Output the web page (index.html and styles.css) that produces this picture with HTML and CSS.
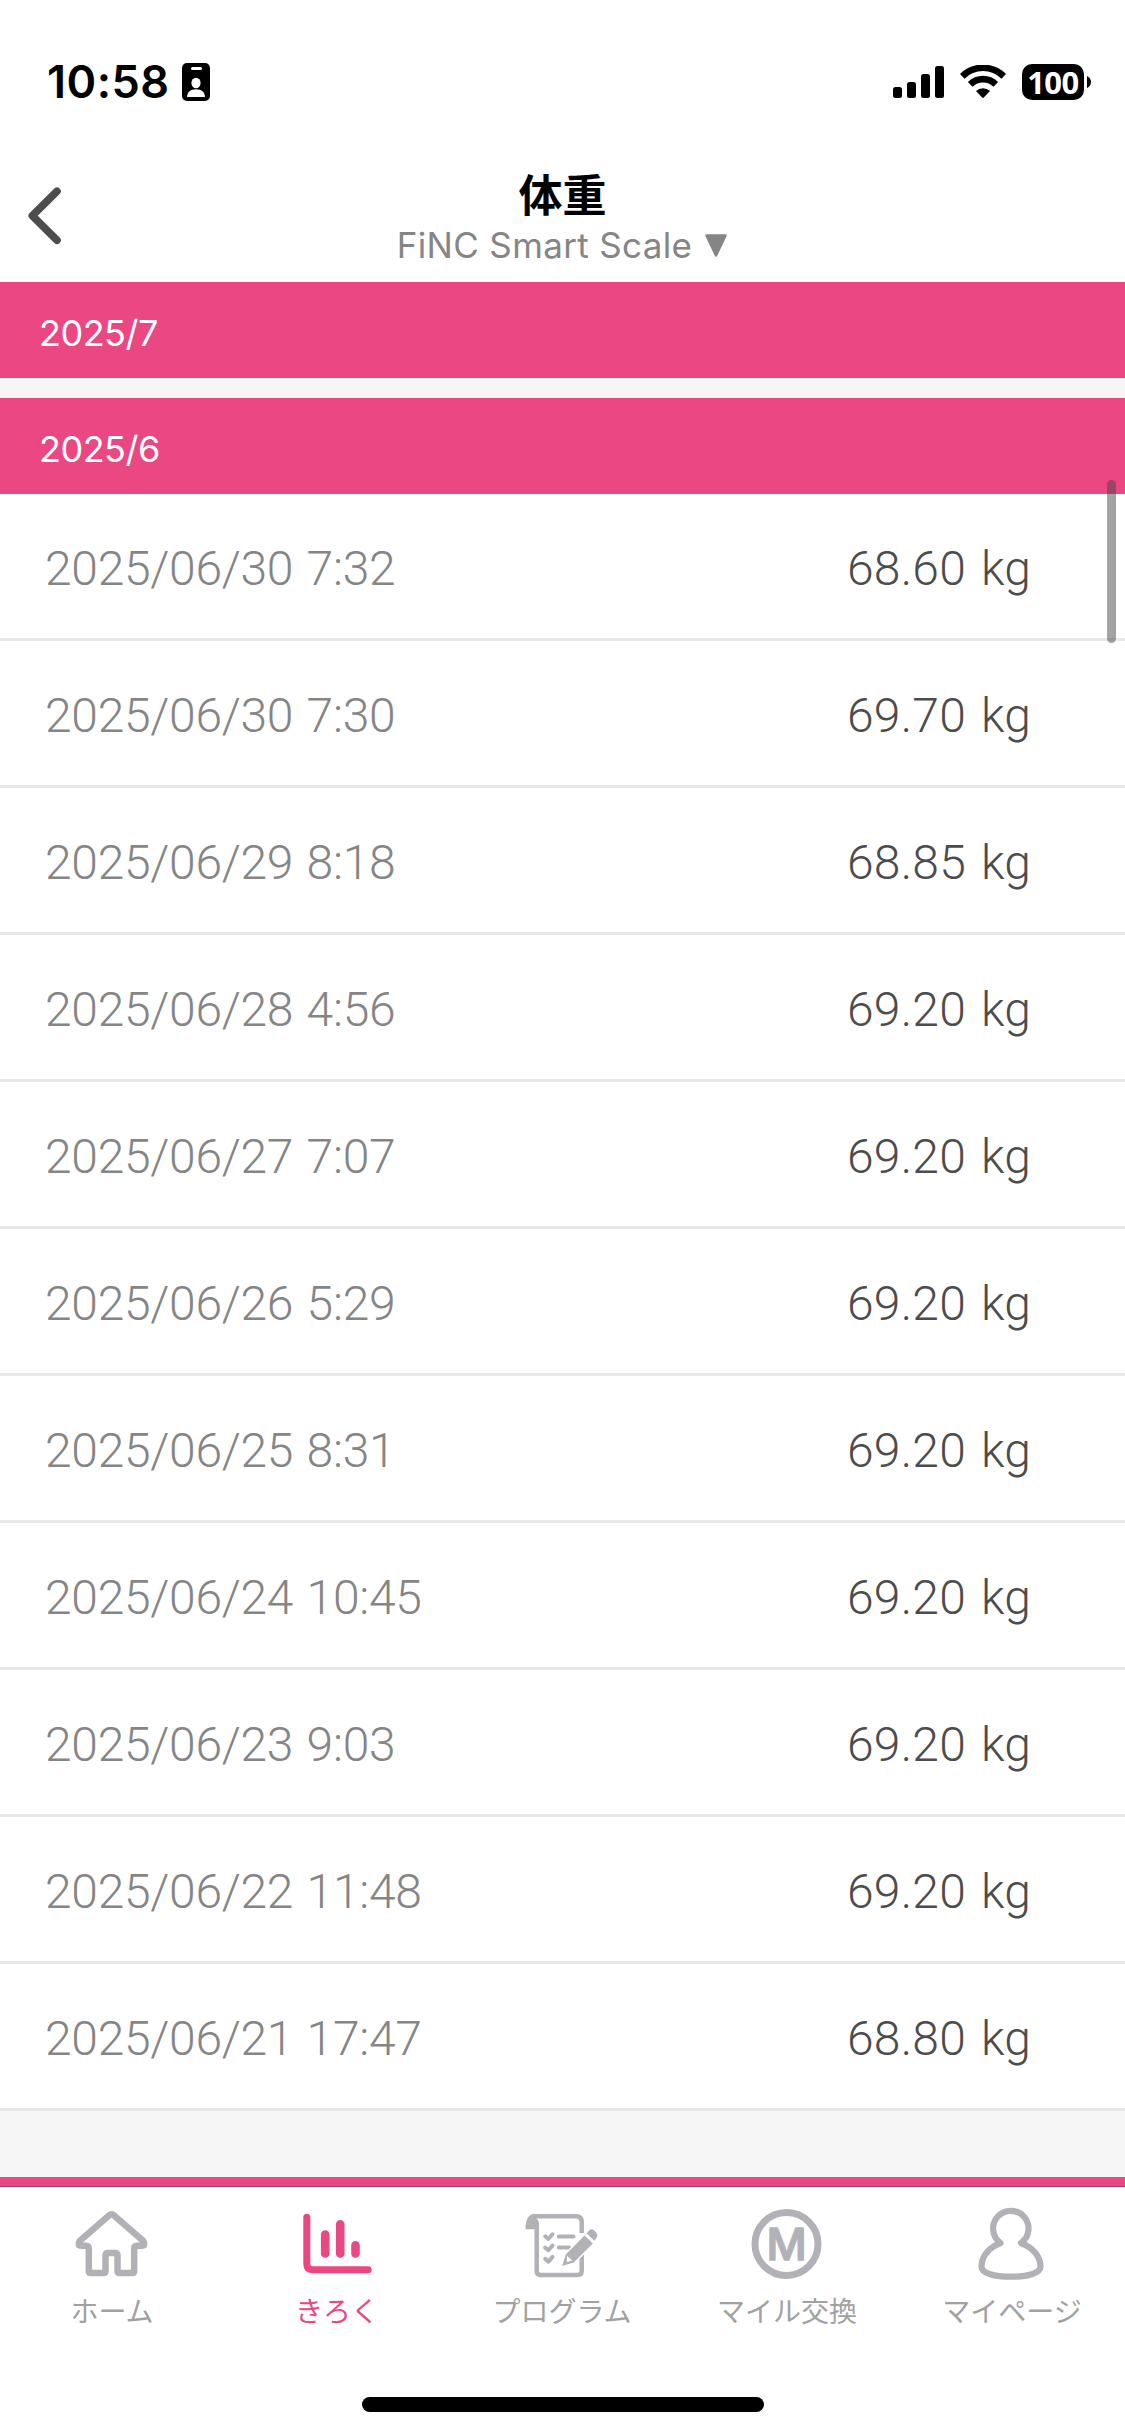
FILE: index.html
```html
<!DOCTYPE html>
<html lang="ja">
<head>
<meta charset="utf-8">
<title>体重</title>
<link rel="stylesheet" href="styles.css">
</head>
<body>
<div class="app">
  <div class="status">
    <div class="status-left">
      <span class="clock">10:58</span>
      <svg class="badge" width="28" height="38" viewBox="0 0 28 38"><rect width="28" height="38" rx="5"/><rect x="9" y="4" width="11" height="3" rx="1.5" fill="#fff"/><ellipse cx="14" cy="20" rx="4.6" ry="5.2" fill="#fff"/><path d="M5 34c0-5 4-7.700 9-7.700s9 2.700 9 7.700z" fill="#fff"/></svg>
    </div>
    <div class="status-right">
      <svg width="51" height="32" viewBox="0 0 51 32"><rect y="21" width="9" height="11" rx="2.500"/><rect x="14" y="16" width="9" height="16" rx="2.500"/><rect x="28" y="8" width="9" height="24" rx="2.500"/><rect x="42" width="9" height="32" rx="2.500"/></svg>
      <svg class="wifi" width="46" height="34" viewBox="0 0 46 34"><g fill="none" stroke="#000" stroke-width="6.600"><path d="M2.300 11.300a29.500 29.500 0 0 1 41.400 0"/><path d="M10.200 19.300a18.300 18.300 0 0 1 25.600 0"/></g><path d="M16 26a10.500 10.500 0 0 1 14 0l-6.200 6.500q-.8.800-1.600 0z"/></svg>
      <div class="battery"><span class="battery-level">100</span></div>
      <svg class="nub" width="4" height="12" viewBox="0 0 4 12"><path d="M0 0q4 2 4 6t-4 6z"/></svg>
    </div>
  </div>
  <header class="header">
    <svg class="back" width="40" height="60" viewBox="0 0 40 60"><path d="M33 5.300L8.300 29.700L33 54.300" fill="none" stroke="#4d4d4d" stroke-width="7.600" stroke-linecap="round" stroke-linejoin="round"/></svg>
    <div class="titles">
      <h1 class="title">体重</h1>
      <div class="device"><span>FiNC Smart Scale</span><svg width="22" height="23" viewBox="0 0 22 23"><path d="M1.500 1.500h19L11 21.500z" fill="#858585" stroke="#858585" stroke-width="2.500" stroke-linejoin="round"/></svg></div>
    </div>
    <div></div>
  </header>
  <main class="records">
    <h2 class="month">2025/7</h2>
    <h2 class="month">2025/6</h2>
    <ul class="list">
      <li class="row"><span class="date">2025/06/30 7:32</span><span class="weight">68.60 kg</span></li>
      <li class="row"><span class="date">2025/06/30 7:30</span><span class="weight">69.70 kg</span></li>
      <li class="row"><span class="date">2025/06/29 8:18</span><span class="weight">68.85 kg</span></li>
      <li class="row"><span class="date">2025/06/28 4:56</span><span class="weight">69.20 kg</span></li>
      <li class="row"><span class="date">2025/06/27 7:07</span><span class="weight">69.20 kg</span></li>
      <li class="row"><span class="date">2025/06/26 5:29</span><span class="weight">69.20 kg</span></li>
      <li class="row"><span class="date">2025/06/25 8:31</span><span class="weight">69.20 kg</span></li>
      <li class="row"><span class="date">2025/06/24 10:45</span><span class="weight">69.20 kg</span></li>
      <li class="row"><span class="date">2025/06/23 9:03</span><span class="weight">69.20 kg</span></li>
      <li class="row"><span class="date">2025/06/22 11:48</span><span class="weight">69.20 kg</span></li>
      <li class="row"><span class="date">2025/06/21 17:47</span><span class="weight">68.80 kg</span></li>
    </ul>
    <div class="scrollbar"></div>
  </main>
  <nav class="tabs">
    <a class="tab">
      <svg width="80" height="80" viewBox="0 0 80 80" fill="none" stroke="currentColor" stroke-width="6.500" stroke-linejoin="round"><path d="M37.500 11Q39.500 9.500 41.500 11L71.300 37Q74 41.700 69.500 41.700H65.200Q62.200 41.700 62.200 44.700V67Q62.200 69 60.200 69H47.500Q45.500 69 45.500 67V51.500Q45.500 49 43 49H36Q33.500 49 33.500 51.500V67Q33.500 69 31.500 69H18.800Q16.800 69 16.800 67V44.700Q16.800 41.700 13.800 41.700H9.500Q5 41.700 7.700 37z"/></svg>
      <span>ホーム</span>
    </a>
    <a class="tab tab-active">
      <svg width="80" height="80" viewBox="0 0 80 80" fill="none" stroke="currentColor" stroke-linecap="round"><path stroke-width="7" d="M9.800 13.300V60Q9.800 65.700 15.500 65.700H71.200"/><path stroke-width="8.600" d="M28.200 30.600V49.500M43.200 20.300V49.500M58.500 41.300V49.500"/></svg>
      <span>きろく</span>
    </a>
    <a class="tab">
      <svg width="80" height="80" viewBox="0 0 80 80" fill="none" stroke="currentColor" stroke-linecap="round" stroke-linejoin="round"><path stroke-width="4.500" stroke-linecap="butt" d="M11 12.200H54Q59.700 12.200 59.700 18V29M59.700 50V67Q59.700 71 55.700 71H18.700Q14.700 71 14.700 67V19"/><path fill="currentColor" stroke="none" d="M3.500 25.300C3.500 15 7 10 12 10V13Q17 15 17 20V25.300z"/><path stroke-width="4" d="M23.200 32.300L26.400 35L30.500 30.300M23.200 43.600L26.400 46.300L30.500 41.600M23.200 54.900L26.400 57.600L30.500 52.900M36.800 32.400H51.500M36.800 43.600H47"/><g fill="currentColor" stroke="#fff" stroke-width="1.500"><path d="M39 63L43 50.300L62.500 30.500L71.800 39.500L52 59.300z"/><path d="M63.500 29.200L67.500 25.200Q69.700 23.500 72.300 25.500L75 28.300Q77 31 75.500 33.500L72.500 38z"/></g><path fill="#fff" stroke="none" d="M45 51.800L50.200 56.500L44.800 58z"/></svg>
      <span>プログラム</span>
    </a>
    <a class="tab">
      <svg width="80" height="80" viewBox="0 0 80 80"><circle cx="39.500" cy="40" r="31.500" fill="none" stroke="currentColor" stroke-width="7"/><text class="coin" x="39.500" y="55.700" text-anchor="middle">M</text></svg>
      <span>マイル交換</span>
    </a>
    <a class="tab">
      <svg width="80" height="80" viewBox="0 0 80 80" fill="none" stroke="currentColor" stroke-width="6.200" stroke-linejoin="round"><path d="M28.600 39A17.700 17.700 0 1 1 49 39C61 43.500 68.500 52.500 68.500 62.500C68.500 69.500 55 72.700 38.800 72.700S9.500 69.500 9.500 62.500C9.500 52.500 16.600 43.500 28.600 39z"/></svg>
      <span>マイページ</span>
    </a>
  </nav>
  <div class="home-area"><div class="home-bar"></div></div>
</div>
</body>
</html>
```

FILE: styles.css
```css
* { box-sizing: border-box; }
body { margin: 0; background: #fff; font-family: Inter, "Noto Sans CJK JP", sans-serif; }
.app { width: 1125px; height: 2436px; display: flex; flex-direction: column; overflow: hidden; }
.status { height: 150px; padding: 14px 34px 0 47px; display: flex; justify-content: space-between; align-items: center; }
.status-left, .status-right { display: flex; align-items: center; }
.clock { font-size: 45px; font-weight: 600; line-height: 54px; width: 135px; letter-spacing: 0.5px; white-space: nowrap; }
.wifi { margin-left: 16px; }
.battery { width: 62px; height: 36px; margin-left: 16px; border-radius: 10px; background: #000; display: flex; align-items: center; justify-content: center; }
.battery-level { color: #fff; font-family: "Noto Sans", sans-serif; font-size: 31px; font-weight: 700; line-height: 34px; letter-spacing: -0.5px; }
.nub { margin-left: 3px; }
.header { height: 132px; padding-left: 24px; display: grid; grid-template-columns: 200px 1fr 224px; }
.back { margin-top: 36px; }
.titles { display: flex; flex-direction: column; align-items: center; }
.title { margin: 17px 0 0; font-family: "Noto Sans CJK JP", sans-serif; font-size: 44px; font-weight: 700; line-height: 52px; }
.device { margin-top: 4px; height: 44px; display: flex; align-items: center; gap: 13px; margin-right: 1px; color: #858585; font-size: 35px; line-height: 44px; letter-spacing: 0.35px; white-space: nowrap; }
.records { position: relative; height: 1895px; background: #f6f6f6; }
.month { margin: 0 0 20px; height: 96px; padding: 6px 0 0 39px; display: flex; align-items: center; background: #eb4783; color: #fff; font-size: 36px; font-weight: 400; letter-spacing: -0.5px; }
.month:nth-of-type(2) { margin-bottom: 0; }
.list { margin: 0; padding: 0; list-style: none; }
.row { height: 147px; padding: 5px 94px 0 45px; display: flex; align-items: center; justify-content: space-between; background: #fff; border-bottom: 3px solid #e8e8e8; font-family: Roboto, sans-serif; font-size: 48px; font-weight: 300; white-space: nowrap; }
.date { color: #858585; letter-spacing: -0.3px; word-spacing: 2px; }
.weight { color: #4c4c4c; letter-spacing: 0.2px; word-spacing: 3px; }
.scrollbar { position: absolute; top: 198px; right: 9px; width: 9px; height: 163px; border-radius: 5px; background: rgba(67, 67, 67, 0.49); }
.tabs { height: 160px; border-top: 9px solid #eb4783; box-shadow: inset 0 1px #8b4565; padding-top: 18px; display: grid; grid-template-columns: repeat(5, 1fr); }
.tab { display: flex; flex-direction: column; align-items: center; color: #b2b1b8; }
.tab svg { display: block; margin-right: 1px; }
.tab span { margin-top: 6px; margin-right: 1px; color: #a1a1a1; font-family: "Noto Sans CJK JP", sans-serif; font-size: 28px; font-weight: 400; line-height: 40px; white-space: nowrap; }
.tab.tab-active span { color: #eb4783; }
.tab-active { color: #eb4783; }
.coin { font-size: 44px; font-weight: 500; fill: currentColor; stroke: currentColor; stroke-width: 1.5px; stroke-linejoin: round; }
.home-area { height: 99px; padding-top: 60px; display: flex; justify-content: center; }
.home-bar { width: 402px; height: 15px; border-radius: 8px; background: #000; }
```
